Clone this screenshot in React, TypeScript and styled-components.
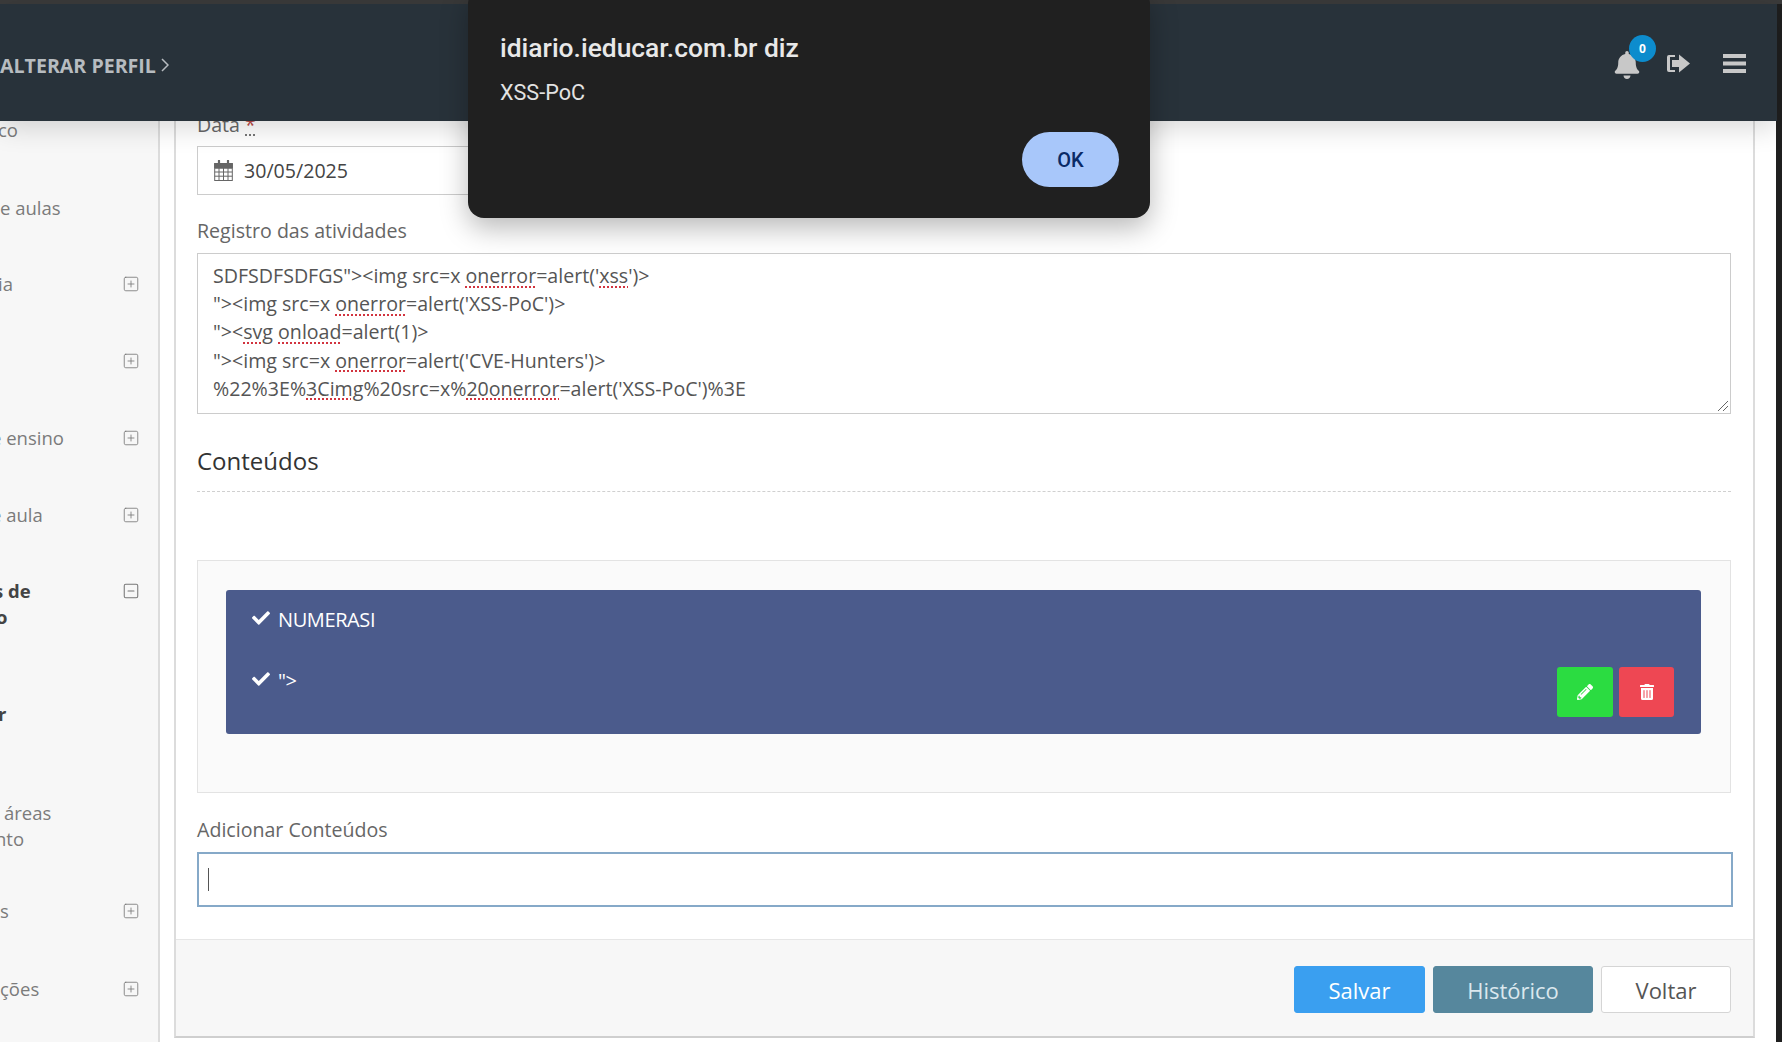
import React from 'react';
import styled, { createGlobalStyle } from 'styled-components';
import { SquareMinus, SquarePlus } from 'lucide-react';
import { FaBell, FaCheck, FaPencilAlt, FaTrashAlt } from 'react-icons/fa';

const GlobalStyle = createGlobalStyle`
  * { box-sizing: border-box; }
  html, body { margin: 0; padding: 0; background: #fff; overflow: hidden; }
  body { font-family: "Open Sans", "Liberation Sans", sans-serif; }
`;

const Screen = styled.div`
  position: relative;
  width: 1782px;
  height: 1042px;
  overflow: hidden;
  background: #1f1f1f;
`;

const TopStrip = styled.div`
  height: 4px;
  background: #3b3b3b;
`;

const Header = styled.header`
  position: relative;
  z-index: 2;
  width: 1777px;
  height: 117px;
  display: flex;
  align-items: center;
  justify-content: space-between;
  background: #28323a;
  box-shadow: 0 6px 26px rgba(0, 0, 0, 0.16);
`;

const ProfileLink = styled.a`
  display: flex;
  align-items: center;
  gap: 5px;
  margin-top: 5px;
  color: #b7bcc0;
  font-size: 19.6px;
  font-weight: 700;
  white-space: nowrap;
`;

const HeaderTools = styled.div`
  display: flex;
  align-items: center;
  margin: 2px 31px 0 0;
`;

const BellWrap = styled.div`
  position: relative;
  display: flex;
  margin-top: 2px;
  margin-right: 26px;
  color: #c8c8c8;
`;

const Badge = styled.span`
  position: absolute;
  top: -16px;
  left: 16px;
  width: 27px;
  height: 27px;
  display: flex;
  align-items: center;
  justify-content: center;
  border-radius: 50%;
  background: #0d8ccd;
  color: #fff;
  font-size: 12px;
  font-weight: 700;
`;

const ToolSvg = styled.svg<{ $gap?: number }>`
  display: block;
  margin-right: ${p => p.$gap ?? 0}px;
  fill: #c8c8c8;
`;

const Content = styled.div`
  display: flex;
  width: 1776px;
  height: 921px;
  background: #fff;
`;

const Sidebar = styled.aside`
  flex: 0 0 160px;
  height: 951px;
  margin-top: -30px;
  overflow: hidden;
  border-right: 2px solid #dcdcdc;
  background: #f7f7f7;
`;

const MenuRow = styled.div<{ $height: number }>`
  display: flex;
  align-items: center;
  justify-content: space-between;
  height: ${p => p.$height}px;
  padding-right: 18px;
  font-size: 18.5px;
  line-height: 26px;
  white-space: nowrap;
`;

const MenuLabel = styled.span<{ $bold?: boolean }>`
  font-weight: ${p => (p.$bold ? 700 : 400)};
  color: ${p => (p.$bold ? '#444' : '#7b7b7b')};
`;

const MenuLine = styled.div<{ $indent: number }>`
  margin-left: ${p => p.$indent}px;
`;

const MenuIcon = styled.span<{ $raised?: boolean }>`
  display: flex;
  margin-bottom: ${p => (p.$raised ? 26 : 0)}px;
  color: #777;
`;

const Panel = styled.main`
  display: flex;
  flex-direction: column;
  width: 1581px;
  height: 938px;
  margin: -21px 0 0 14px;
  padding-top: 13px;
  border-left: 2px solid #dcdcdc;
  border-right: 2px solid #dcdcdc;
  border-bottom: 2px solid #cfcfcf;
  background: #fff;
`;

const FormBody = styled.div`
  padding: 0 22px 0 21px;
`;

const FieldLabel = styled.label<{ $gap?: number }>`
  display: block;
  margin-bottom: ${p => p.$gap ?? 9}px;
  color: #666;
  font-size: 19.6px;
  line-height: 24px;
`;

const Required = styled.span`
  color: #b94a48;
  text-decoration: underline dotted #777;
  text-underline-offset: 3px;
`;

const DateField = styled.div`
  display: flex;
  align-items: center;
  gap: 11px;
  width: 520px;
  height: 49px;
  margin-bottom: 24px;
  padding-left: 16px;
  border: 1px solid #ccc;
  color: #444;
  font-size: 19.6px;
`;

const FakeTextarea = styled.div`
  position: relative;
  height: 161px;
  padding: 8px 15px;
  border: 1px solid #ccc;
  color: #555;
  font-size: 19.6px;
  line-height: 28.2px;
  white-space: pre;
`;

const Misspelled = styled.span`
  text-decoration: underline dotted #d2343f 2px;
  text-underline-offset: 3px;
`;

const ResizeGrip = styled.svg`
  position: absolute;
  right: 1px;
  bottom: 1px;
`;

const SectionTitle = styled.h2`
  margin: 31px 0 68px;
  padding-bottom: 14px;
  border-bottom: 1px dashed #d0d0d0;
  color: #333;
  font-size: 24px;
  font-weight: 400;
  line-height: 32px;
`;

const Well = styled.section`
  height: 233px;
  padding: 29px 29px 29px 28px;
  border: 1px solid #e3e3e3;
  background: #fafafa;
`;

const ContentList = styled.div`
  height: 144px;
  padding: 0 27px 0 26px;
  border-radius: 3px;
  background: #4b5b8c;
  color: #fff;
  font-size: 20px;
`;

const ContentRow = styled.div<{ $height: number; $top: number }>`
  display: flex;
  align-items: flex-start;
  gap: 8px;
  height: ${p => p.$height}px;
  padding-top: ${p => p.$top}px;
  line-height: 28px;
  letter-spacing: -0.4px;
`;

const CheckMark = styled.span`
  display: flex;
  margin-top: 3px;
  font-size: 18px;
`;

const RowActions = styled.div`
  display: flex;
  gap: 6px;
  margin-left: auto;
`;

const ActionButton = styled.button<{ $color: string; $width: number }>`
  display: flex;
  align-items: center;
  justify-content: center;
  width: ${p => p.$width}px;
  height: 50px;
  padding: 0;
  border: 0;
  border-radius: 3px;
  background: ${p => p.$color};
  color: #fff;
  font-size: 16px;
`;

const AddLabel = styled(FieldLabel)`
  margin: 25px 0 10px;
`;

const AddInput = styled.div`
  display: flex;
  align-items: center;
  height: 55px;
  margin-right: -2px;
  padding-left: 9px;
  border: 2px solid #86a9c8;
  background: #fff;
`;

const Caret = styled.span`
  width: 1px;
  height: 23px;
  background: #555;
`;

const FormFooter = styled.footer`
  display: flex;
  justify-content: flex-end;
  gap: 8px;
  flex: 1;
  margin-top: 32px;
  padding: 26px 22px 0 0;
  border-top: 1px solid #e6e6e6;
  background: #f7f7f7;
`;

const FooterButton = styled.button<{ $bg: string; $fg: string; $width: number; $border?: string }>`
  width: ${p => p.$width}px;
  height: 47px;
  padding: 0;
  border: 1px solid ${p => p.$border ?? p.$bg};
  border-radius: 3px;
  background: ${p => p.$bg};
  color: ${p => p.$fg};
  font-family: inherit;
  font-size: 22px;
`;

const Scrollbar = styled.div`
  position: absolute;
  top: 4px;
  right: 0;
  bottom: 0;
  width: 5px;
  background: #1f1f1f;
`;

const Dialog = styled.div`
  position: absolute;
  z-index: 3;
  top: -12px;
  left: 468px;
  width: 682px;
  height: 230px;
  padding: 42px 31px 0 32px;
  border-radius: 16px;
  background: #202020;
  box-shadow: 0 10px 28px rgba(0, 0, 0, 0.28);
  font-family: Roboto, "Liberation Sans", sans-serif;
`;

const DialogTitle = styled.div`
  color: #e8e8e8;
  font-size: 26.4px;
  font-weight: 500;
  line-height: 36px;
`;

const DialogMessage = styled.div`
  margin-top: 13px;
  color: #e3e3e3;
  font-size: 21.6px;
  line-height: 28px;
`;

const DialogActions = styled.div`
  display: flex;
  justify-content: flex-end;
  margin-top: 25px;
`;

const OkButton = styled.button`
  width: 97px;
  height: 55px;
  padding: 0;
  border: 0;
  border-radius: 28px;
  background: #a8c7fa;
  color: #0a2a66;
  font-family: inherit;
  font-size: 20px;
  font-weight: 500;
`;

const CalendarIcon = () => (
  <svg width="19" height="21" viewBox="0 0 19 21" fill="none" stroke="#666">
    <rect x="0.7" y="3.5" width="17.6" height="17" fill="#fff" />
    <path d="M0.7 8h17.6M0.7 12h17.6M0.7 16.2h17.6M5 8v12.5M9.5 8v12.5M14 8v12.5" />
    <path d="M0.7 3.5h17.6V8H0.7z" fill="#666" />
    <path d="M5 0.8v4M14 0.8v4" strokeWidth="2.2" strokeLinecap="round" />
  </svg>
);

type MenuItem = {
  h: number;
  lines: Array<[string, number]>;
  icon?: 'plus' | 'minus';
  bold?: boolean;
};

const Menu: MenuItem[] = [
  { h: 78, lines: [['co', -2]] },
  { h: 77, lines: [['e aulas', 0]] },
  { h: 76, lines: [['ia', -2]], icon: 'plus' },
  { h: 78, lines: [['', 0]], icon: 'plus' },
  { h: 75, lines: [['e ensino', -9]], icon: 'plus' },
  { h: 80, lines: [['e aula', -9]], icon: 'plus' },
  { h: 97, lines: [['s de', -6], ['o', -4]], icon: 'minus', bold: true },
  { h: 124, lines: [['r', -2]], bold: true },
  { h: 100, lines: [['áreas', 4], ['nto', -5]] },
  { h: 70, lines: [['s', 0]], icon: 'plus' },
  { h: 86, lines: [['ções', 0]], icon: 'plus' },
];

export default function App() {
  return (
    <Screen>
      <GlobalStyle />
      <TopStrip />
      <Header>
        <ProfileLink>
          ALTERAR PERFIL
          <svg width="8" height="14" viewBox="0 0 8 14" fill="none" stroke="#b7bcc0" strokeWidth="1.5">
            <path d="M1 1l6 6-6 6" />
          </svg>
        </ProfileLink>
        <HeaderTools>
          <BellWrap>
            <FaBell size={28} />
            <Badge>0</Badge>
          </BellWrap>
          <ToolSvg $gap={33} width="23" height="19" viewBox="0 0 23 19">
            <path d="M2 1h6v2H3v13h5v2H2a2 2 0 0 1-2-2V3a2 2 0 0 1 2-2z" />
            <path d="M5 6h7V0.5L23 9.5 12 18.5V13H5z" />
          </ToolSvg>
          <ToolSvg width="23" height="19" viewBox="0 0 23 19">
            <rect width="23" height="4" y="0" />
            <rect width="23" height="4" y="7.5" />
            <rect width="23" height="4" y="15" />
          </ToolSvg>
        </HeaderTools>
      </Header>
      <Content>
        <Sidebar>
          {Menu.map((item, i) => (
            <MenuRow key={i} $height={item.h}>
              <MenuLabel $bold={item.bold}>
                {item.lines.map(([text, indent], j) => (
                  <MenuLine key={j} $indent={indent}>
                    {text}
                  </MenuLine>
                ))}
              </MenuLabel>
              {item.icon && (
                <MenuIcon $raised={item.lines.length > 1}>
                  {item.icon === 'plus' ? (
                    <SquarePlus size={18} strokeWidth={1.1} />
                  ) : (
                    <SquareMinus size={18} strokeWidth={1.4} />
                  )}
                </MenuIcon>
              )}
            </MenuRow>
          ))}
        </Sidebar>
        <Panel>
          <FormBody>
            <FieldLabel>
              Data <Required>*</Required>
            </FieldLabel>
            <DateField>
              <CalendarIcon />
              30/05/2025
            </DateField>
            <FieldLabel $gap={10}>Registro das atividades</FieldLabel>
            <FakeTextarea>
              <div>
                SDFSDFSDFGS"&gt;&lt;img src=x <Misspelled>onerror</Misspelled>=alert('<Misspelled>xss</Misspelled>')&gt;
              </div>
              <div>
                "&gt;&lt;img src=x <Misspelled>onerror</Misspelled>=alert('XSS-PoC')&gt;
              </div>
              <div>
                "&gt;&lt;<Misspelled>svg</Misspelled> <Misspelled>onload</Misspelled>=alert(1)&gt;
              </div>
              <div>
                "&gt;&lt;img src=x <Misspelled>onerror</Misspelled>=alert('CVE-Hunters')&gt;
              </div>
              <div>
                %22%3E%<Misspelled>3Cimg</Misspelled>%20src=x%<Misspelled>20onerror</Misspelled>=alert('XSS-PoC')%3E
              </div>
              <ResizeGrip width="12" height="12" viewBox="0 0 12 12" stroke="#666" fill="none">
                <path d="M1 11L11 1M6 11l5-5" />
              </ResizeGrip>
            </FakeTextarea>
            <SectionTitle>Conteúdos</SectionTitle>
            <Well>
              <ContentList>
                <ContentRow $height={60} $top={16}>
                  <CheckMark>
                    <FaCheck />
                  </CheckMark>
                  NUMERASI
                </ContentRow>
                <ContentRow $height={67} $top={17}>
                  <CheckMark>
                    <FaCheck />
                  </CheckMark>
                  "&gt;
                  <RowActions>
                    <ActionButton $color="#2bdc41" $width={56} aria-label="Editar">
                      <FaPencilAlt />
                    </ActionButton>
                    <ActionButton $color="#ee4753" $width={55} aria-label="Excluir">
                      <FaTrashAlt />
                    </ActionButton>
                  </RowActions>
                </ContentRow>
              </ContentList>
            </Well>
            <AddLabel>Adicionar Conteúdos</AddLabel>
            <AddInput>
              <Caret />
            </AddInput>
          </FormBody>
          <FormFooter>
            <FooterButton $bg="#3a9ff0" $fg="#fff" $width={131}>
              Salvar
            </FooterButton>
            <FooterButton $bg="#56879d" $fg="#dbe8ee" $width={160}>
              Histórico
            </FooterButton>
            <FooterButton $bg="#fff" $fg="#555" $border="#d5d5d5" $width={130}>
              Voltar
            </FooterButton>
          </FormFooter>
        </Panel>
      </Content>
      <Scrollbar />
      <Dialog>
        <DialogTitle>idiario.ieducar.com.br diz</DialogTitle>
        <DialogMessage>XSS-PoC</DialogMessage>
        <DialogActions>
          <OkButton>OK</OkButton>
        </DialogActions>
      </Dialog>
    </Screen>
  );
}
